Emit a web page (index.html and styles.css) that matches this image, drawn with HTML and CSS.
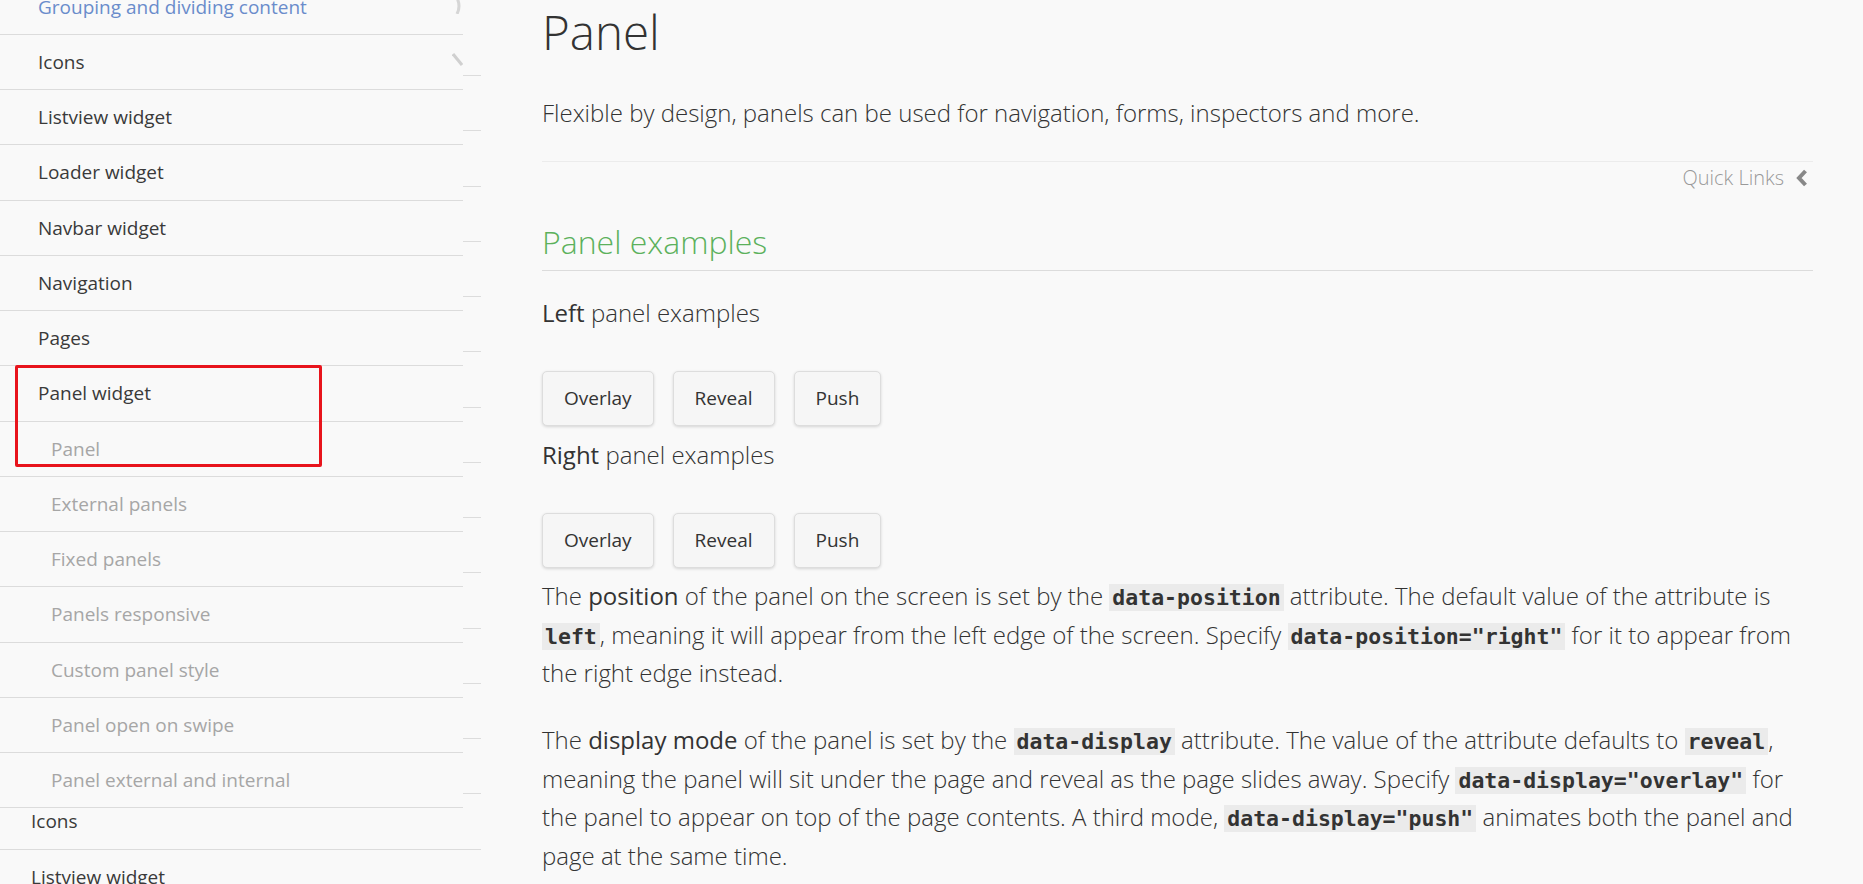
FILE: index.html
```html
<!DOCTYPE html>
<html lang="en">
<head>
<meta charset="utf-8">
<title>Panel</title>
<link rel="stylesheet" href="styles.css">
</head>
<body>
<div class="page">
  <aside class="sidebar">
    <ul class="nav nav-back">
      <li>Grouping and dividing content</li>
      <li>Icons</li>
      <li>Listview widget</li>
      <li>Loader widget</li>
      <li>Navbar widget</li>
      <li>Navigation</li>
      <li>Pages</li>
      <li>Panel widget</li>
      <li>Popup widget</li>
      <li>Rangeslider widget</li>
      <li>Responsive grids</li>
      <li>Select widget</li>
      <li>Slider widget</li>
      <li>Grouping and dividing content</li>
      <li>Icons</li>
      <li>Listview widget</li>
    </ul>
    <ul class="nav nav-front">
      <li class="link">Grouping and dividing content<svg class="edge edge-top" width="12" height="16" viewBox="0 0 12 16"><path d="M2 0 Q6 8 2 16" fill="none" stroke="#d6d6d6" stroke-width="3"/></svg></li>
      <li>Icons<svg class="edge edge-mid" width="12" height="14" viewBox="0 0 12 14"><path d="M1 1 L10 12" fill="none" stroke="#d0d0d0" stroke-width="3"/></svg></li>
      <li>Listview widget</li>
      <li>Loader widget</li>
      <li>Navbar widget</li>
      <li>Navigation</li>
      <li>Pages</li>
      <li>Panel widget</li>
      <li class="sub">Panel</li>
      <li class="sub">External panels</li>
      <li class="sub">Fixed panels</li>
      <li class="sub">Panels responsive</li>
      <li class="sub">Custom panel style</li>
      <li class="sub">Panel open on swipe</li>
      <li class="sub">Panel external and internal</li>
    </ul>
    <div class="highlight"></div>
  </aside>

  <main class="content">
    <h1 class="title">Panel</h1>
    <p class="lead">Flexible by design, panels can be used for navigation, forms, inspectors and more.</p>
    <hr class="rule-light">
    <div class="quick">
      <span>Quick Links</span>
      <svg width="13" height="18" viewBox="0 0 13 18"><path d="M10.5 2 L4 9 L10.5 16" fill="none" stroke="#888" stroke-width="4"/></svg>
    </div>
    <h2 class="section">Panel examples</h2>

    <p class="label"><strong>Left</strong> panel examples</p>
    <div class="btns">
      <button class="btn">Overlay</button>
      <button class="btn">Reveal</button>
      <button class="btn">Push</button>
    </div>
    <p class="label label-right"><strong>Right</strong> panel examples</p>
    <div class="btns btns-right">
      <button class="btn">Overlay</button>
      <button class="btn">Reveal</button>
      <button class="btn">Push</button>
    </div>

    <p class="body">The <strong>position</strong> of the panel on the screen is set by the <code>data-position</code> attribute. The default value of the attribute is <code>left</code>, meaning it will appear from the left edge of the screen. Specify <code>data-position="right"</code> for it to appear from the right edge instead.</p>
    <p class="body">The <strong>display mode</strong> of the panel is set by the <code>data-display</code> attribute. The value of the attribute defaults to <code>reveal</code>, meaning the panel will sit under the page and reveal as the page slides away. Specify <code>data-display="overlay"</code> for the panel to appear on top of the page contents. A third mode, <code>data-display="push"</code> animates both the panel and page at the same time.</p>
  </main>
</div>
</body>
</html>
```

FILE: styles.css
```css
html, body {
  margin: 0;
  padding: 0;
  background: #f9f9f9;
}
body {
  font-family: "Open Sans", "Liberation Sans", sans-serif;
  color: #333;
  height: 884px;
  overflow: hidden;
}
.page {
  display: flex;
  align-items: flex-start;
  height: 884px;
}

/* ---------- sidebar ---------- */
.sidebar {
  position: relative;
  flex: none;
  width: 481px;
  height: 884px;
  overflow: hidden;
}
.nav {
  list-style: none;
  margin: 0;
  padding: 0;
}
.nav li {
  position: relative;
  height: 24.25px;
  line-height: 24.25px;
  padding: 15px 0;
  border-bottom: 1px solid #dcdcdc;
  font-size: 19px;
  color: #3a3a3a;
  white-space: nowrap;
  overflow: hidden;
}
.nav-back {
  width: 481px;
  margin-top: 20.75px;
}
.nav-back li {
  padding-left: 31px;
}
.nav-front {
  position: absolute;
  left: 0;
  top: -20.3px;
  width: 463px;
  background: #f9f9f9;
}
.nav-front li {
  padding-left: 38px;
}
.nav-front li.sub {
  padding-left: 51px;
  color: #a6a6a6;
}
.nav-front li.link {
  color: #6a8ccb;
}
.edge {
  position: absolute;
}
.edge-top {
  right: -4px;
  top: 18px;
}
.edge-mid {
  right: -1px;
  top: 18px;
}
.highlight {
  position: absolute;
  left: 15px;
  top: 365px;
  width: 301px;
  height: 96px;
  border: 3px solid #e8141c;
  border-radius: 2px;
}

/* ---------- content ---------- */
.content {
  flex: 1;
  min-width: 0;
  padding: 0 50px 0 61px;
}
.title {
  margin: 1px 0 0;
  font-size: 47.5px;
  line-height: 61.2px;
  font-weight: 300;
  color: #333;
}
.lead {
  margin: 32.6px 0 0;
  font-size: 24px;
  line-height: 36.7px;
  font-weight: 300;
  color: #333;
}
.rule-light {
  margin: 29.2px 0 0;
  border: 0;
  border-top: 1px solid #ececec;
  height: 0;
}
.quick {
  display: flex;
  justify-content: flex-end;
  align-items: center;
  gap: 11px;
  margin: 4.3px 5px 0 0;
  height: 24px;
  font-size: 20px;
  font-weight: 300;
  color: #999;
}
.quick svg {
  display: block;
}
.section {
  margin: 30.7px 0 0;
  padding-bottom: 6.4px;
  border-bottom: 1px solid #dcdcdc;
  font-size: 32px;
  line-height: 42.9px;
  font-weight: 300;
  color: #5cb15c;
}
.label {
  margin: 24px 0 0;
  font-size: 24px;
  line-height: 36.7px;
  font-weight: 300;
}
.label strong {
  font-weight: 400;
}
.label-right {
  margin-top: 11px;
}
.btns {
  display: flex;
  gap: 19px;
  margin-top: 39.3px;
}
.btn {
  height: 55px;
  padding: 0 21px;
  font-family: "Open Sans", "Liberation Sans", sans-serif;
  font-size: 19px;
  font-weight: 400;
  color: #333;
  background: #f6f6f6;
  border: 1px solid #dddddd;
  border-radius: 5px;
  box-shadow: 0 1px 3px rgba(0, 0, 0, 0.15);
}
.body {
  margin: 30px 0 0;
  font-size: 24px;
  line-height: 36.7px;
  font-weight: 300;
  color: #333;
}
.btns-right + .body {
  margin-top: 10px;
}
.body strong {
  font-weight: 400;
}
code {
  font-family: "DejaVu Sans Mono", "Liberation Mono", monospace;
  font-weight: 700;
  font-size: 21.5px;
  padding: 1px 3px;
  background: #ebebeb;
  color: #333;
}
```
